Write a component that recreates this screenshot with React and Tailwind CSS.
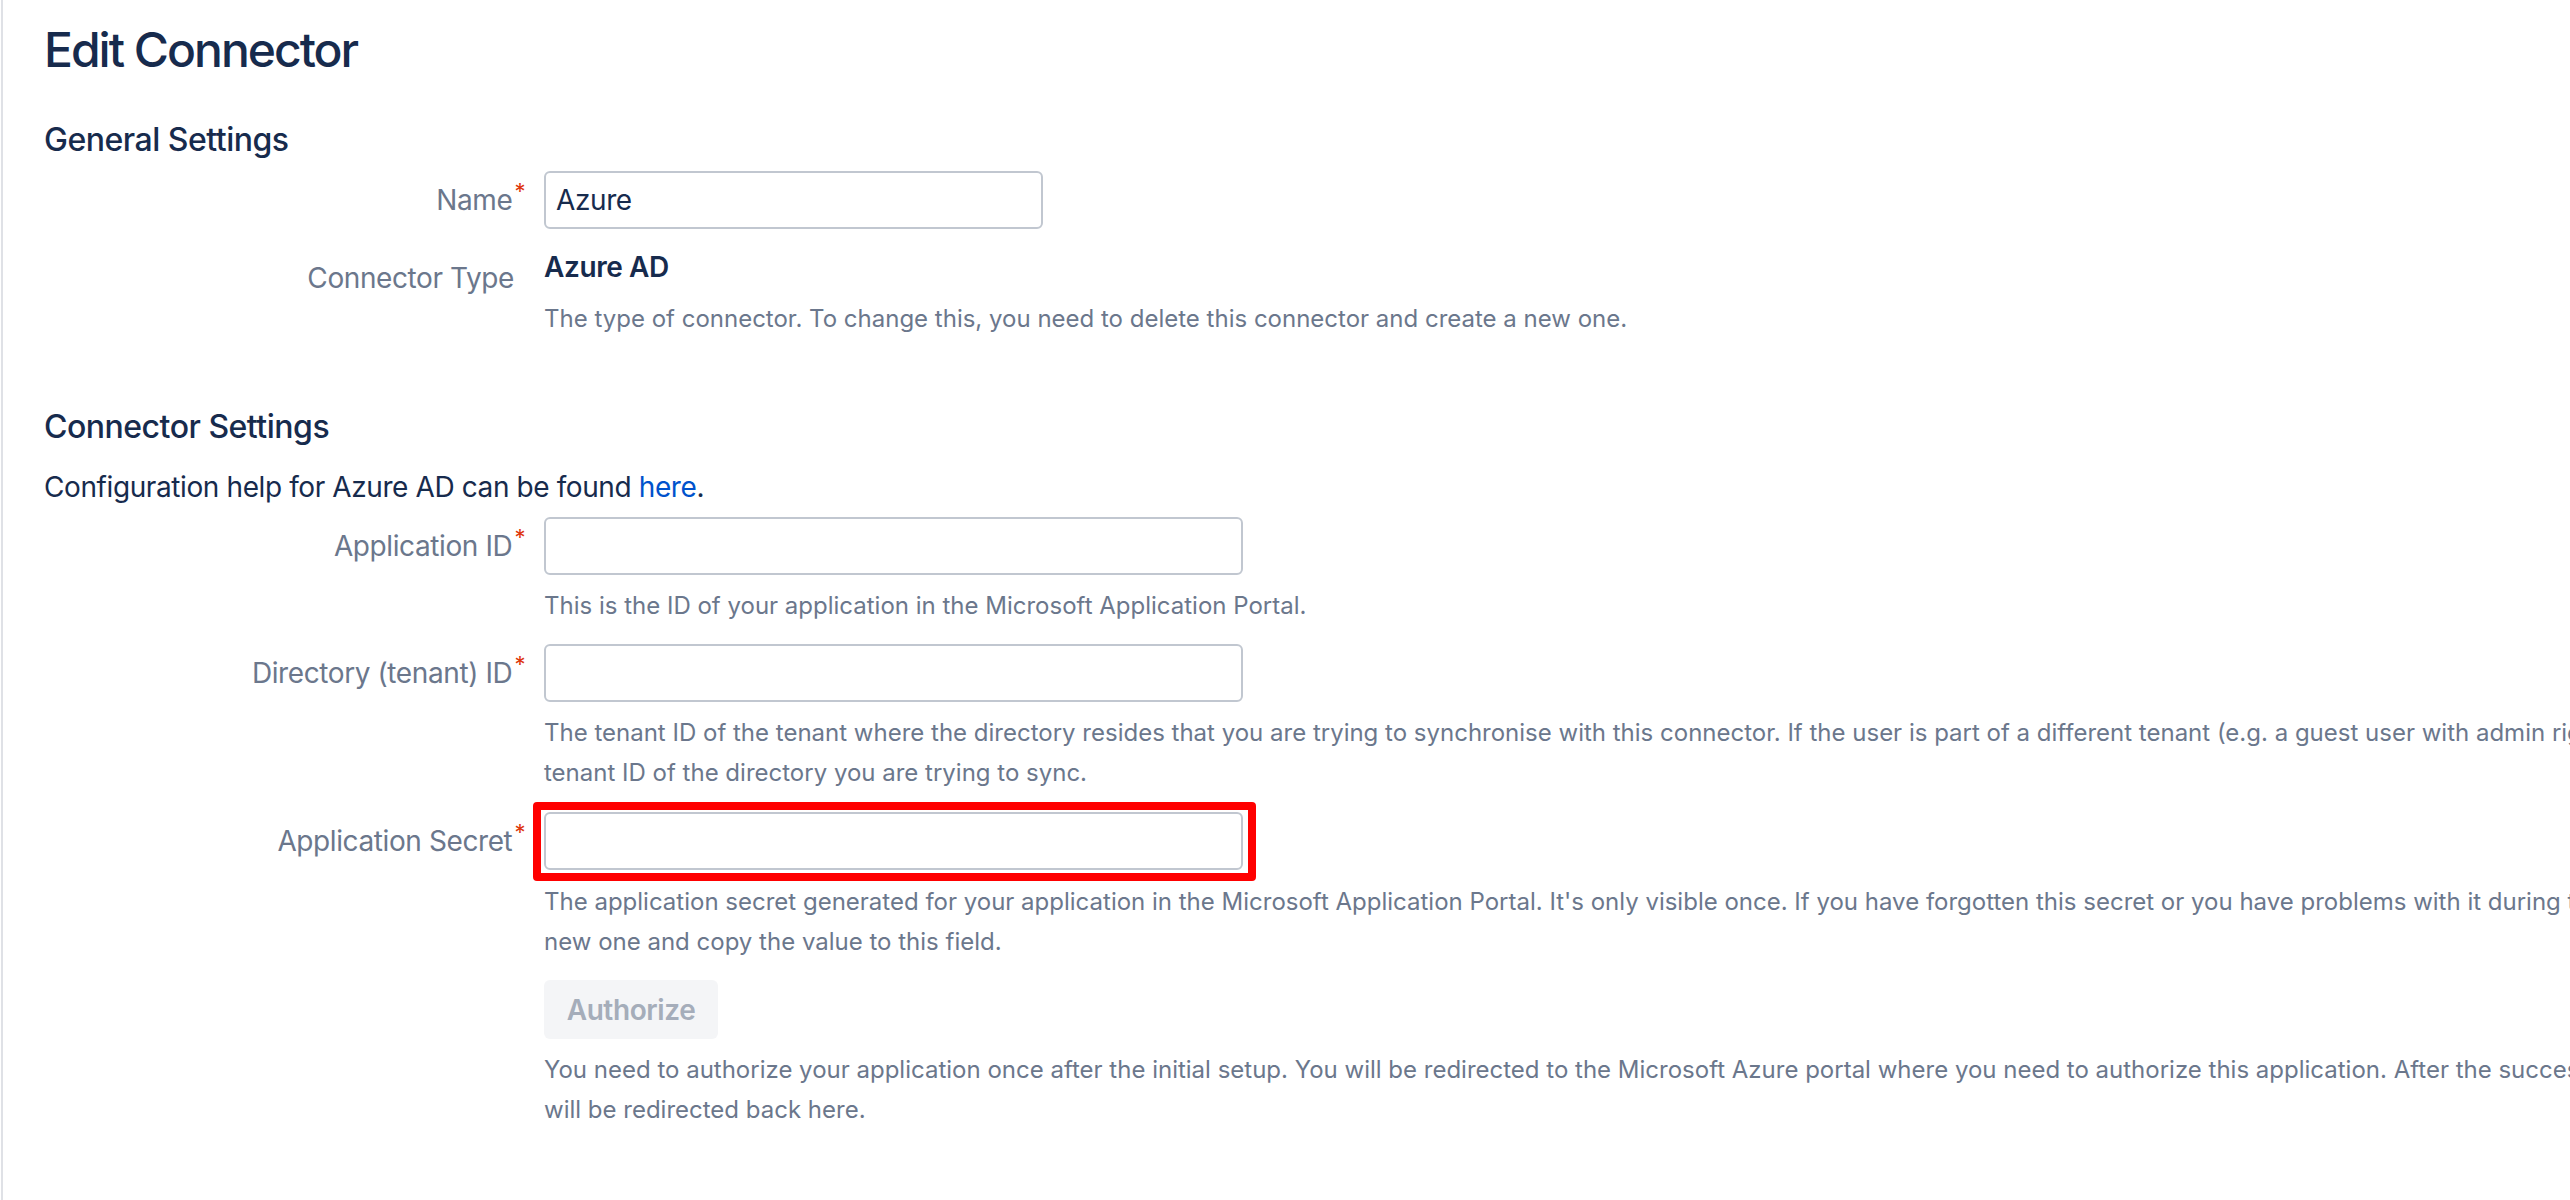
import React from 'react';

const FONT = "font-['Inter','Noto_Sans','Liberation_Sans',sans-serif]";

function Required() {
  return (
    <span className="relative -top-[11px] ml-[2px] text-[22px] leading-none text-[#de350b]">*</span>
  );
}

function FieldLabel({ children, required, className = '' }) {
  return (
    <div
      className={`w-[500px] shrink-0 text-right text-[28px] tracking-[-0.4px] text-[#6b778c] ${required ? 'pr-[19px]' : 'pr-[30px]'} ${className}`}
    >
      {children}
      {required && <Required />}
    </div>
  );
}

function TextField({ value = '', wide, highlight }) {
  return (
    <div className={`relative h-[58px] ${wide ? 'w-[699px]' : 'w-[499px]'}`}>
      <input
        type="text"
        defaultValue={value}
        className="h-full w-full rounded-[6px] border-2 border-[#c1c7d0] bg-white px-[10px] text-[28px] tracking-[-0.4px] text-[#172b4d] outline-none"
      />
      {/* red annotation frame around the field */}
      {highlight && (
        <div className="pointer-events-none absolute -left-[11px] -right-[13px] -top-[10px] -bottom-[11px] rounded-[4px] border-[8px] border-[#ff0000]" />
      )}
    </div>
  );
}

function Help({ lines, className = '' }) {
  return (
    <div className={`ml-[500px] text-[24px] leading-[40px] text-[#6b778c] ${className}`}>
      {lines.map((line, i) => (
        <div key={i} className="whitespace-nowrap">{line}</div>
      ))}
    </div>
  );
}

export default function App() {
  return (
    <div className={`flex h-[1200px] w-full overflow-hidden bg-white text-[#172b4d] ${FONT}`}>
      <div className="ml-[1px] w-[2px] shrink-0 bg-[#dfe1e6]" />
      <div className="min-w-0 flex-1 pl-[41px] pt-[20px]">
        {/* Header */}
        <h1 className="text-[48px] font-medium leading-[60px] tracking-[-2px]">Edit Connector</h1>

        {/* General Settings */}
        <h2 className="mt-[40px] text-[32px] font-medium leading-[40px] tracking-[-0.5px]">General Settings</h2>

        <div className="mt-[11px] flex">
          <FieldLabel required className="leading-[58px]">Name</FieldLabel>
          <TextField value="Azure" />
        </div>

        <div className="mt-[18px] flex">
          <FieldLabel className="pt-[11px] leading-[40px]">Connector Type</FieldLabel>
          <div className="text-[28px] font-semibold leading-[40px] tracking-[-0.4px]">Azure AD</div>
        </div>
        <Help
          className="mt-[1px]"
          lines={['The type of connector. To change this, you need to delete this connector and create a new one.']}
        />

        {/* Connector Settings */}
        <h2 className="mt-[68px] text-[32px] font-medium leading-[40px] tracking-[-0.5px]">Connector Settings</h2>
        <p className="mt-[20px] text-[28px] leading-[40px] tracking-[-0.4px]">
          Configuration help for Azure AD can be found <a href="#" className="text-[#0052cc]">here</a>.
        </p>

        <div className="mt-[10px] flex">
          <FieldLabel required className="leading-[58px]">Application ID</FieldLabel>
          <TextField wide />
        </div>
        <Help
          className="mt-[11px]"
          lines={['This is the ID of your application in the Microsoft Application Portal.']}
        />

        <div className="mt-[18px] flex">
          <FieldLabel required className="leading-[58px]">Directory (tenant) ID</FieldLabel>
          <TextField wide />
        </div>
        <Help
          className="mt-[11px]"
          lines={[
            'The tenant ID of the tenant where the directory resides that you are trying to synchronise with this connector. If the user is part of a different tenant (e.g. a guest user with admin rights), please use the',
            'tenant ID of the directory you are trying to sync.',
          ]}
        />

        <div className="mt-[19px] flex">
          <FieldLabel required className="leading-[58px]">Application Secret</FieldLabel>
          <TextField wide highlight />
        </div>
        <Help
          className="mt-[12px]"
          lines={[
            "The application secret generated for your application in the Microsoft Application Portal. It's only visible once. If you have forgotten this secret or you have problems with it during the setup, please generate a",
            'new one and copy the value to this field.',
          ]}
        />

        <div className="ml-[500px] mt-[18px]">
          <button
            disabled
            className="h-[59px] w-[174px] rounded-[6px] bg-[#f4f5f7] text-[28px] font-semibold tracking-[-0.4px] text-[#a5adba]"
          >
            Authorize
          </button>
        </div>
        <Help
          className="mt-[11px]"
          lines={[
            'You need to authorize your application once after the initial setup. You will be redirected to the Microsoft Azure portal where you need to authorize this application. After the successful authorization you',
            'will be redirected back here.',
          ]}
        />
      </div>
    </div>
  );
}
